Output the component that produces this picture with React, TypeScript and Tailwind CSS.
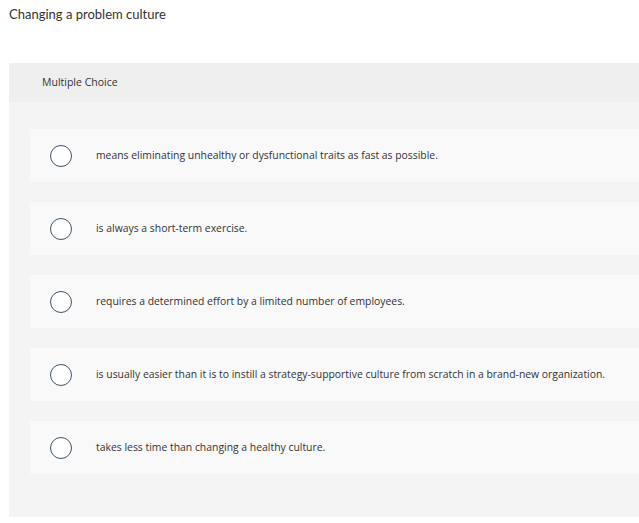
const options = [
  "means eliminating unhealthy or dysfunctional traits as fast as possible.",
  "is always a short-term exercise.",
  "requires a determined effort by a limited number of employees.",
  "is usually easier than it is to instill a strategy-supportive culture from scratch in a brand-new organization.",
  "takes less time than changing a healthy culture.",
];

function Option({ text }: { text: string }) {
  return (
    <div className="flex h-[53px] items-center bg-[#f9f9f9] pl-[20px]">
      <span className="h-[22px] w-[22px] shrink-0 rounded-full border-[1.5px] border-[#3f5468] bg-white" />
      <span className="ml-[24px] font-['Open_Sans',sans-serif] text-[10.4px] text-[#333]">{text}</span>
    </div>
  );
}

export default function App() {
  return (
    <div className="h-[523px] w-[639px] overflow-hidden bg-white pt-[6px] pl-[9px] font-['Lato',sans-serif]">
      <h1 className="text-[13px] leading-[16px] text-[#333]">Changing a problem culture</h1>
      <div className="mt-[41px] h-[454px] bg-[#f4f4f4]">
        <div className="flex h-[39px] items-center bg-[#efefef] pl-[33px] font-['Open_Sans',sans-serif] text-[10.5px] text-[#333]">
          Multiple Choice
        </div>
        <div className="flex flex-col gap-[20px] pt-[27px] pl-[21px]">
          {options.map((o) => (
            <Option key={o} text={o} />
          ))}
        </div>
      </div>
    </div>
  );
}
